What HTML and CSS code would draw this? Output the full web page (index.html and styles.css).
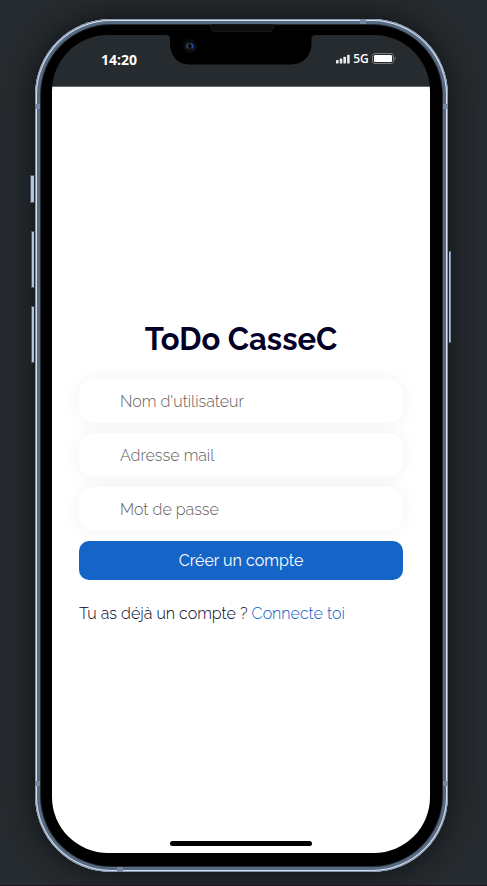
FILE: index.html
```html
<!DOCTYPE html>
<html lang="fr">
<head>
<meta charset="utf-8">
<meta name="viewport" content="width=device-width, initial-scale=1">
<title>ToDo CasseC</title>
<link rel="stylesheet" href="styles.css">
</head>
<body>
<div class="phone">
  <span class="key key-mute"></span>
  <span class="key key-up"></span>
  <span class="key key-down"></span>
  <span class="key key-power"></span>
  <span class="band band-top"></span>
  <span class="band band-bottom"></span>
  <span class="band band-side band-left-high"></span>
  <span class="band band-side band-left-low"></span>
  <span class="band band-side band-right-high"></span>
  <span class="band band-side band-right-low"></span>
  <span class="speaker"></span>
  <div class="screen">
    <header class="status">
      <time class="clock">14:20</time>
      <svg class="notch" width="150" height="30" viewBox="0 0 150 30" aria-hidden="true">
        <path d="M0 0C3 0 4 1 4 4V8C4 21 12 29.500 24 29.500H124C137 29.500 145.500 21 145.500 8V4C145.500 1 147 0 150 0Z" fill="#000"/>
        <circle cx="24" cy="11" r="7" fill="#0b0c0e"/>
        <circle cx="24" cy="11" r="4" fill="#101827"/>
        <path d="M22 8.500Q20 11 22 13.500" fill="none" stroke="#2d4865" stroke-width="1.500"/>
        <path d="M25 8.500Q28 11 26 13.500" fill="none" stroke="#24429c" stroke-width="2"/>
        <circle cx="24" cy="11" r="1.500" fill="#000"/>
      </svg>
      <div class="indicators">
        <svg width="14" height="10" viewBox="0 0 14 10" fill="#e8e9e9" aria-hidden="true">
          <rect x="0" y="6" width="2.600" height="3.500" rx=".6"/>
          <rect x="3.700" y="4.500" width="2.600" height="5" rx=".6"/>
          <rect x="7.400" y="2.700" width="2.600" height="6.800" rx=".6"/>
          <rect x="11.100" y=".8" width="2.600" height="8.700" rx=".6"/>
        </svg>
        <span>5G</span>
        <svg width="24" height="11" viewBox="0 0 24 11" aria-hidden="true">
          <rect x=".5" y=".5" width="21" height="10" rx="2.500" fill="none" stroke="#777b7d"/>
          <rect x="2" y="2" width="18" height="7" rx="1.200" fill="#fff"/>
          <path d="M22.700 3.800Q24.700 5.500 22.700 7.200Z" fill="#85898b"/>
        </svg>
      </div>
    </header>
    <main class="page">
      <form class="signup">
        <h1>ToDo CasseC</h1>
        <input type="text" placeholder="Nom d'utilisateur" aria-label="Nom d'utilisateur">
        <input type="email" placeholder="Adresse mail" aria-label="Adresse mail">
        <input type="password" placeholder="Mot de passe" aria-label="Mot de passe">
        <button type="button">Créer un compte</button>
        <p>Tu as déjà un compte ? <a href="#">Connecte toi</a></p>
      </form>
    </main>
    <span class="home-bar"></span>
  </div>
</div>
</body>
</html>
```
FILE: styles.css
```css
* {
  box-sizing: border-box;
}

body {
  display: flex;
  min-height: 100vh;
  margin: 0;
  padding: 19px 39px 13px 35px;
  border-bottom: 1px solid #1c1721;
  background: #262b2f;
  font-family: Raleway, Lato, sans-serif;
  font-size: 16px;
  font-weight: 300;
  color: #030027;
}

.phone {
  position: relative;
  display: flex;
  flex: 1;
  padding: 16px 18px 19px 17px;
  border-radius: 76px;
  background: #000;
  box-shadow:
    inset 0 0 0 1px #8395b0,
    inset 0 0 0 2px #d5deea,
    inset 0 0 0 5px #566a82,
    inset 0 0 0 6px #252b33,
    0 0 32px #0e1114;
}

.screen {
  position: relative;
  display: flex;
  flex: 1;
  flex-direction: column;
  overflow: hidden;
  border-radius: 56px;
  background: linear-gradient(#262b2f 52px, #fff 52px);
}

.status {
  display: grid;
  grid-template-columns: 1fr 150px 1fr;
  height: 52px;
  border-bottom: 1px solid #686b6e;
  color: #fff;
  font-family: "Segoe UI", "Open Sans", sans-serif;
}

.clock {
  padding: 14px 0 0 20px;
  font-size: 14px;
  font-weight: 700;
  line-height: 22px;
  text-align: center;
}

.indicators {
  display: flex;
  align-items: center;
  justify-content: center;
  gap: 3px;
  height: 47px;
  padding-right: 14px;
  font-size: 12px;
  font-weight: 600;
}

.page {
  display: flex;
  flex: 1;
  flex-direction: column;
  justify-content: center;
  padding: 4px 27px 0;
}

.signup {
  display: flex;
  flex-direction: column;
  gap: 10px;
}

h1 {
  margin: 0 0 12px;
  font-size: 31px;
  font-weight: 700;
  line-height: 36px;
  text-align: center;
}

input {
  width: 100%;
  height: 44px;
  padding: 0 41px;
  border: 0;
  border-radius: 15px;
  background: #fff;
  box-shadow: 0 0 20px rgba(0, 0, 0, 0.05);
  font: inherit;
}

input::placeholder {
  color: #606060;
}

button {
  position: relative;
  height: 39px;
  border: 0;
  border-radius: 10px;
  background: #1565c8;
  color: #fff;
  font: inherit;
  font-weight: 400;
}

p {
  margin: 15px 0 0;
  line-height: 18px;
}

a {
  color: #0a60cc;
  text-decoration: none;
}

.home-bar {
  position: absolute;
  bottom: 7px;
  left: 50%;
  width: 142px;
  height: 5px;
  border-radius: 3px;
  background: #000;
  transform: translateX(-50%);
}

.speaker {
  position: absolute;
  top: 5px;
  left: 50%;
  z-index: 1;
  width: 64px;
  height: 8px;
  border: 1px solid #181818;
  border-radius: 2px 2px 5px 5px;
  background: #0d0d0d;
  transform: translateX(-50%);
}

.key {
  position: absolute;
  left: -4px;
  width: 4px;
  height: 57px;
  border: 1px solid #4c5968;
  border-right-color: #1b2431;
  background: #b4c3dc;
}

.key-mute {
  top: 156px;
  left: -5px;
  width: 5px;
  height: 28px;
}

.key-up {
  top: 212px;
}

.key-down {
  top: 287px;
}

.key-power {
  top: 232px;
  right: -3px;
  left: auto;
  width: 3px;
  height: 92px;
  border-right-color: #8194b0;
  border-left-color: #1b2431;
}

.band {
  position: absolute;
  width: 6px;
  height: 5px;
  background: #7885a6;
}

.band-side {
  width: 5px;
  height: 5px;
}

.band-top {
  top: 0;
  right: 82px;
}

.band-bottom {
  bottom: 0;
  left: 82px;
}

.band-left-high {
  top: 85px;
  left: 0;
}

.band-left-low {
  bottom: 86px;
  left: 0;
}

.band-right-high {
  top: 85px;
  right: 0;
}

.band-right-low {
  right: 0;
  bottom: 86px;
}
```
